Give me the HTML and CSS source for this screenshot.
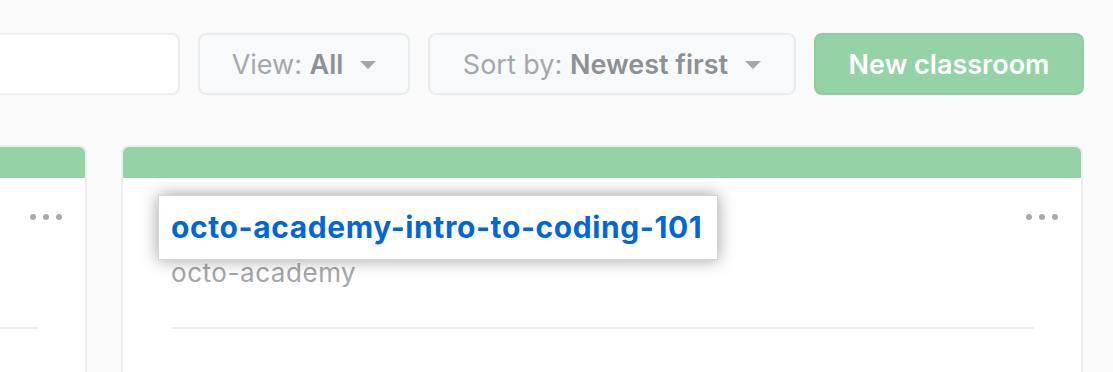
FILE: index.html
```html
<!DOCTYPE html>
<html lang="en">
<head>
<meta charset="utf-8">
<title>Classrooms</title>
<link rel="stylesheet" href="styles.css">
</head>
<body>
<div class="page">
  <div class="toolbar">
    <div class="search"></div>
    <button class="select view"><span class="label">View: <b>All</b></span><span class="caret"></span></button>
    <button class="select sort"><span class="label">Sort by: <b>Newest first</b></span><span class="caret"></span></button>
    <button class="primary">New classroom</button>
  </div>
  <div class="cards">
    <div class="card">
      <div class="card-head"></div>
      <div class="card-body">
        <div class="card-row">
          <div class="titles placeholder"></div>
          <div class="dots"><i></i><i></i><i></i></div>
        </div>
        <div class="divider"></div>
      </div>
    </div>
    <div class="card">
      <div class="card-head"></div>
      <div class="card-body">
        <div class="card-row">
          <div class="titles">
            <span class="title highlight"><a href="#">octo-academy-intro-to-coding-101</a></span>
            <div class="org">octo-academy</div>
          </div>
          <div class="dots"><i></i><i></i><i></i></div>
        </div>
        <div class="divider"></div>
      </div>
    </div>
  </div>
</div>
</body>
</html>
```
FILE: styles.css
```css
html, body {
  margin: 0;
  padding: 0;
  background: #fbfbfc;
  overflow: hidden;
  font-family: Inter, "Liberation Sans", sans-serif;
}
.page {
  width: 1113px;
  height: 372px;
  overflow: hidden;
}
.toolbar {
  display: flex;
  justify-content: flex-end;
  gap: 18px;
  padding: 33px 29px 0 0;
  height: 62px;
}
.search {
  flex: 0 0 500px;
  height: 62px;
  box-sizing: border-box;
  background: #fff;
  border: 2px solid #eceef0;
  border-radius: 8px;
}
.select {
  flex: none;
  box-sizing: border-box;
  height: 62px;
  display: flex;
  align-items: center;
  justify-content: center;
  gap: 17px;
  background: #f8f9fa;
  border: 2px solid #e9ebed;
  border-radius: 8px;
  font-family: inherit;
  font-size: 27px;
  color: #a5a8ab;
  padding: 0;
}
.select b {
  font-weight: 600;
  color: #8d9094;
}
.view { width: 212px; }
.sort { width: 368px; }
.caret {
  width: 0;
  height: 0;
  border-left: 8px solid transparent;
  border-right: 8px solid transparent;
  border-top: 8px solid #a5a8ab;
  margin-top: 2px;
}
.primary {
  flex: none;
  box-sizing: border-box;
  width: 270px;
  height: 62px;
  background: #95d2a5;
  border: 2px solid #8fcd9f;
  border-radius: 8px;
  color: #fff;
  font-family: inherit;
  font-size: 27px;
  font-weight: 600;
  padding: 0;
}
.cards {
  display: flex;
  justify-content: flex-end;
  gap: 34px;
  padding: 50px 30px 0 0;
}
.card {
  flex: 0 0 962px;
  box-sizing: border-box;
  height: 260px;
  background: #fff;
  border: 2px solid #eceef0;
  border-bottom: none;
  border-radius: 8px 8px 0 0;
  overflow: hidden;
}
.card-head {
  height: 31px;
  background: #95d2a5;
}
.card-body {
  padding: 17px 23px 0 48px;
}
.card-row {
  display: flex;
  justify-content: space-between;
  align-items: flex-start;
}
.titles {
  display: flex;
  flex-direction: column;
  align-items: flex-start;
}
.placeholder {
  height: 93px;
}
.title {
  display: inline-block;
  font-size: 30px;
  font-weight: 700;
  letter-spacing: 0.6px;
  line-height: 36px;
  padding: 13px 15px 14px 12px;
  margin: 0 -16px 0 -13px;
  border: 1px solid transparent;
  color: #0366d6;
}
.title a {
  color: #0366d6;
  text-decoration: none;
}
.highlight {
  background: #fff;
  border-color: #d4d4d4;
  box-shadow: 0 0 16px rgba(0, 0, 0, 0.38);
  position: relative;
  z-index: 1;
}
.org {
  font-size: 26px;
  letter-spacing: 0.55px;
  line-height: 30px;
  margin-top: -2px;
  color: #a4a6a9;
}
.dots {
  display: flex;
  gap: 7px;
  margin-top: 19px;
}
.dots i {
  display: block;
  width: 6px;
  height: 6px;
  border-radius: 50%;
  background: #a8abaf;
}
.divider {
  height: 2px;
  background: #efeff0;
  margin: 39px 24px 0 0;
}
```
